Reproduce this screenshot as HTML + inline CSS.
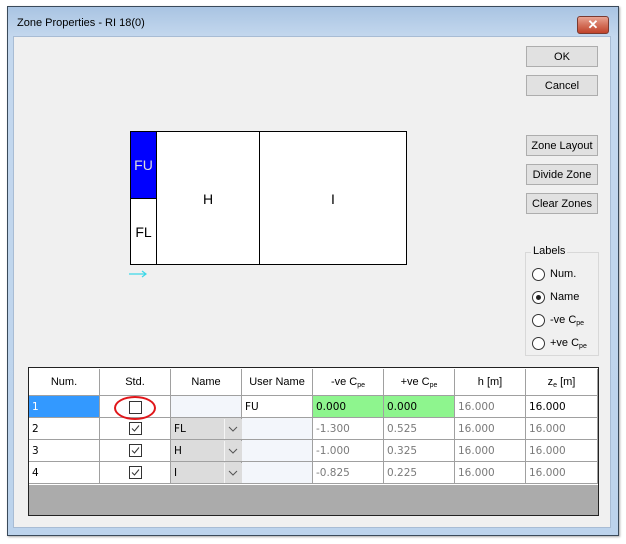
<!DOCTYPE html>
<html><head><meta charset="utf-8"><style>
*{box-sizing:border-box;margin:0;padding:0}
body{width:626px;height:544px;background:#fff;font-family:"Liberation Sans",sans-serif;font-size:11px;color:#000;position:relative;overflow:hidden}
.abs{position:absolute}
.frame{left:7px;top:6px;width:612px;height:530px;border:1px solid #3a4a5a;background:linear-gradient(#a9c4e2,#c4d8ee 30px,#bcd3ec);box-shadow:1px 1px 2px #aaa}
.client{left:13px;top:36px;width:598px;height:492px;background:#f0f0f0;border:1px solid #a8bcd4}
.title{left:17px;top:17px;font-size:11px;color:#000}
.close{left:577px;top:16px;width:32px;height:18px;border:1px solid #7a3a30;border-radius:3px;background:linear-gradient(#e9a493,#d3705a 50%,#c0432b);color:#fff;font-weight:bold;font-size:13px;text-align:center;line-height:16px}
.btn{position:absolute;left:526px;width:72px;height:21px;border:1px solid #adadad;background:#e1e1e1;text-align:center;line-height:20px;font-size:11px}
.cell{position:absolute;border-right:1px solid #a0a0a0;border-bottom:1px solid #a0a0a0;height:22px;line-height:23px;padding-left:3px;font-family:"DejaVu Sans",sans-serif;font-size:10.5px}
.g{color:#7a7a7a}
.hd{text-align:center;padding:0;line-height:27px;height:27px;font-family:"Liberation Sans",sans-serif;font-size:11px}
sub{font-size:7px;vertical-align:-2px}
.radio{position:absolute;left:532px;width:13px;height:13px;border:1px solid #333;border-radius:50%;background:#fff}
.rl{position:absolute;left:550px;font-size:11px}
.chk{position:absolute;width:13px;height:13px;border:1px solid #333;background:#fff}
</style></head><body>
<div class="abs frame"></div>
<div class="abs client"></div>
<div class="abs title">Zone Properties - RI 18(0)</div>
<div class="abs close">✕</div>
<div class="btn" style="top:46px">OK</div>
<div class="btn" style="top:75px">Cancel</div>
<div class="btn" style="top:135px">Zone Layout</div>
<div class="btn" style="top:164px">Divide Zone</div>
<div class="btn" style="top:193px">Clear Zones</div>

<div class="abs" style="left:130px;top:131px;width:277px;height:134px;border:1px solid #000;background:#fff"></div>
<div class="abs" style="left:130px;top:131px;width:27px;height:68px;background:#0000ff;border:1px solid #000;color:#ddd;font-size:14px;text-align:center;line-height:66px">FU</div>
<div class="abs" style="left:130px;top:198px;width:27px;height:67px;border:1px solid #000;font-size:14px;text-align:center;line-height:66px">FL</div>
<div class="abs" style="left:156px;top:131px;width:104px;height:134px;border:1px solid #000;font-size:14px;text-align:center;line-height:134px">H</div>
<div class="abs" style="left:259px;top:131px;width:148px;height:134px;border:1px solid #000;font-size:14px;text-align:center;line-height:134px">I</div>
<svg class="abs" style="left:128px;top:269px" width="22" height="10"><path d="M1 5H18M14 2L18 5L14 8" stroke="#3cd8e8" stroke-width="1.2" fill="none"/></svg>

<div class="abs" style="left:525px;top:252px;width:74px;height:104px;border:1px solid #d8d8d8"></div>
<div class="abs" style="left:531px;top:245px;background:#f0f0f0;padding:0 2px;font-size:11px">Labels</div>
<div class="radio" style="top:268px"></div><div class="rl" style="top:268px">Num.</div>
<div class="radio" style="top:291px"><div style="position:absolute;left:3px;top:3px;width:5px;height:5px;border-radius:50%;background:#222"></div></div><div class="rl" style="top:291px">Name</div>
<div class="radio" style="top:314px"></div><div class="rl" style="top:314px">-ve C<sub>pe</sub></div>
<div class="radio" style="top:337px"></div><div class="rl" style="top:337px">+ve C<sub>pe</sub></div>

<div class="abs" style="left:28px;top:367px;width:571px;height:149px;border:1px solid #222;background:#ababab"></div>
<div class="abs" style="left:29px;top:368px;width:569px;height:117px;background:#fff"></div>
<div class="cell hd" style="left:29px;top:369px;width:71px">Num.</div>
<div class="cell hd" style="left:100px;top:369px;width:71px">Std.</div>
<div class="cell hd" style="left:171px;top:369px;width:71px">Name</div>
<div class="cell hd" style="left:242px;top:369px;width:71px">User Name</div>
<div class="cell hd" style="left:313px;top:369px;width:71px">-ve C<sub>pe</sub></div>
<div class="cell hd" style="left:384px;top:369px;width:71px">+ve C<sub>pe</sub></div>
<div class="cell hd" style="left:455px;top:369px;width:71px">h [m]</div>
<div class="cell hd" style="left:526px;top:369px;width:72px">z<sub>e</sub> [m]</div>

<div class="cell" style="left:29px;top:396px;width:71px;background:#3399ff;color:#fff">1</div>
<div class="cell" style="left:100px;top:396px;width:71px"></div>
<div class="cell" style="left:171px;top:396px;width:71px;background:#f3f6fb"></div>
<div class="cell" style="left:242px;top:396px;width:71px">FU</div>
<div class="cell" style="left:313px;top:396px;width:71px;background:#8ef58e">0.000</div>
<div class="cell" style="left:384px;top:396px;width:71px;background:#8ef58e">0.000</div>
<div class="cell g" style="left:455px;top:396px;width:71px">16.000</div>
<div class="cell" style="left:526px;top:396px;width:72px">16.000</div>
<div class="chk" style="left:129px;top:401px"></div>
<div class="abs" style="left:114px;top:396px;width:42px;height:24px;border:2px solid #e0161a;border-radius:50%"></div>

<div class="cell" style="left:29px;top:418px;width:71px">2</div>
<div class="cell" style="left:100px;top:418px;width:71px"></div>
<div class="cell" style="left:171px;top:418px;width:71px;background:#dcdcdc">FL</div>
<div class="cell" style="left:242px;top:418px;width:71px;background:#f3f6fb"></div>
<div class="cell g" style="left:313px;top:418px;width:71px">-1.300</div>
<div class="cell g" style="left:384px;top:418px;width:71px">0.525</div>
<div class="cell g" style="left:455px;top:418px;width:71px">16.000</div>
<div class="cell g" style="left:526px;top:418px;width:72px">16.000</div>

<div class="cell" style="left:29px;top:440px;width:71px">3</div>
<div class="cell" style="left:100px;top:440px;width:71px"></div>
<div class="cell" style="left:171px;top:440px;width:71px;background:#dcdcdc">H</div>
<div class="cell" style="left:242px;top:440px;width:71px;background:#f3f6fb"></div>
<div class="cell g" style="left:313px;top:440px;width:71px">-1.000</div>
<div class="cell g" style="left:384px;top:440px;width:71px">0.325</div>
<div class="cell g" style="left:455px;top:440px;width:71px">16.000</div>
<div class="cell g" style="left:526px;top:440px;width:72px">16.000</div>

<div class="cell" style="left:29px;top:462px;width:71px">4</div>
<div class="cell" style="left:100px;top:462px;width:71px"></div>
<div class="cell" style="left:171px;top:462px;width:71px;background:#dcdcdc">I</div>
<div class="cell" style="left:242px;top:462px;width:71px;background:#f3f6fb"></div>
<div class="cell g" style="left:313px;top:462px;width:71px">-0.825</div>
<div class="cell g" style="left:384px;top:462px;width:71px">0.225</div>
<div class="cell g" style="left:455px;top:462px;width:71px">16.000</div>
<div class="cell g" style="left:526px;top:462px;width:72px">16.000</div>

<div class="abs" style="left:224px;top:419px;width:18px;height:20px;background:#dcdcdc;border-left:1px solid #f5f5f5"></div>
<div class="abs" style="left:224px;top:441px;width:18px;height:20px;background:#dcdcdc;border-left:1px solid #f5f5f5"></div>
<div class="abs" style="left:224px;top:463px;width:18px;height:20px;background:#dcdcdc;border-left:1px solid #f5f5f5"></div>
<svg class="abs" style="left:228px;top:426px" width="10" height="6"><path d="M1 1L5 5L9 1" stroke="#555" fill="none"/></svg>
<svg class="abs" style="left:228px;top:448px" width="10" height="6"><path d="M1 1L5 5L9 1" stroke="#555" fill="none"/></svg>
<svg class="abs" style="left:228px;top:470px" width="10" height="6"><path d="M1 1L5 5L9 1" stroke="#555" fill="none"/></svg>

<svg class="abs" style="left:129px;top:422px" width="14" height="14"><rect x="0.5" y="0.5" width="12" height="12" fill="#fff" stroke="#333"/><path d="M3 6.5L5.5 9L10 3.5" stroke="#333" fill="none"/></svg>
<svg class="abs" style="left:129px;top:444px" width="14" height="14"><rect x="0.5" y="0.5" width="12" height="12" fill="#fff" stroke="#333"/><path d="M3 6.5L5.5 9L10 3.5" stroke="#333" fill="none"/></svg>
<svg class="abs" style="left:129px;top:466px" width="14" height="14"><rect x="0.5" y="0.5" width="12" height="12" fill="#fff" stroke="#333"/><path d="M3 6.5L5.5 9L10 3.5" stroke="#333" fill="none"/></svg>
</body></html>
